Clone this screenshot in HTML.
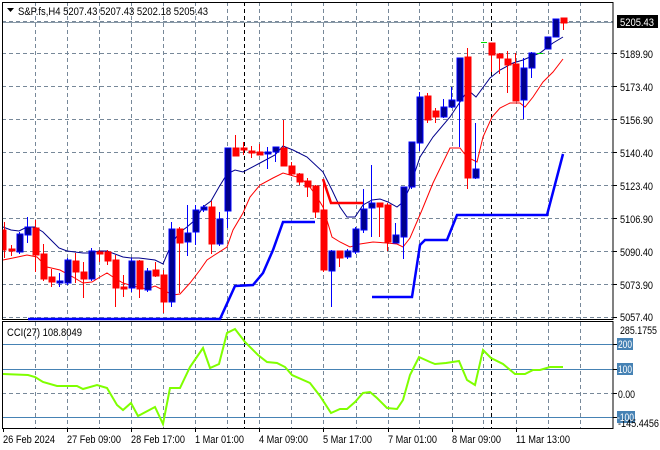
<!DOCTYPE html>
<html><head><meta charset="utf-8"><style>
html,body{margin:0;padding:0;background:#fff;width:660px;height:450px;overflow:hidden}
svg{display:block}
text{font-family:"Liberation Sans",sans-serif;font-size:11px;fill:#000}
</style></head><body>
<svg width="660" height="450" viewBox="0 0 660 450" xmlns="http://www.w3.org/2000/svg">
<rect width="660" height="450" fill="#fff"/>
<g stroke="#778899" stroke-width="1" stroke-dasharray="4,3" fill="none">
<path d="M2 21.5H613M2 53.5H613M2 86.5H613M2 119.5H613M2 152.5H613M2 185.5H613M2 218.5H613M2 251.5H613M2 284.5H613M2 317.5H613"/>
<path d="M35.5 2V319M67.5 2V319M99.5 2V319M131.5 2V319M163.5 2V319M195.5 2V319M227.5 2V319M259.5 2V319M291.5 2V319M323.5 2V319M356.5 2V319M388.5 2V319M419.5 2V319M452.5 2V319M483.5 2V319M516.5 2V319M548.5 2V319M580.5 2V319"/>
<path d="M35.5 322V428M67.5 322V428M99.5 322V428M131.5 322V428M163.5 322V428M195.5 322V428M227.5 322V428M259.5 322V428M291.5 322V428M323.5 322V428M356.5 322V428M388.5 322V428M419.5 322V428M452.5 322V428M483.5 322V428M516.5 322V428M548.5 322V428M580.5 322V428M2 393.5H613"/>
</g>
<g stroke="#000" stroke-dasharray="4,3"><path d="M244.5 2V319M244.5 322V428M491.5 2V319M491.5 322V428"/></g>
<path d="M2 22.5H613" stroke="#8a9aa8" stroke-width="1"/>
<g stroke="#4682b4"><path d="M2 344.5H613M2 369.5H613M2 417.5H613"/></g>
<rect x="2.5" y="2.5" width="610.5" height="317" fill="none" stroke="#000"/>
<rect x="2.5" y="321.5" width="610.5" height="107" fill="none" stroke="#000"/>
<g stroke="#000"><path d="M613 53.5h4M613 86.5h4M613 119.5h4M613 152.5h4M613 185.5h4M613 218.5h4M613 251.5h4M613 284.5h4M613 317.5h4M613 344.5h4M613 369.5h4M613 393.5h4M613 417.5h4"/>
<path d="M3.5 428v4M67.5 428v4M131.5 428v4M195.5 428v4M259.5 428v4M323.5 428v4M388.5 428v4M452.5 428v4M516.5 428v4"/></g>
<polyline fill="none" stroke="#00008b" stroke-width="1" points="3,227 11,230 19,231 27,227 35,227 43,232 51,240 59,248 67,251 75,252 83,253 91,253 99,251 107,251 115,254 123,257 131,258 139,258 147,259 155,260 163,264 171,245 179,233 187,227 195,220 203,207 211,201 219,187 227,174 235,170 243,172 260,163 275,155 283,146 293,150 307,157 323,172 332,190 340,207 347,217 355,217 363,205 372,200 380,199 388,202 397,207 403,202 410,187 420,157 433,137 450,117 460,102 468,90 476,97 490,78 500,70 513,63 523,60 530,57 540,53 553,43 563,37"/>
<polyline fill="none" stroke="#ff0000" stroke-width="1" points="3,260 13,258 27,255 37,257 47,267 60,270 73,277 83,283 92,282 100,277 107,273 113,277 123,283 133,286 147,289 155,286 163,290 173,295 180,294 190,283 200,270 207,260 213,256 227,247 233,230 243,213 250,197 260,185 273,178 283,173 297,177 307,183 317,197 323,207 332,237 340,242 350,247 360,244 373,242 387,243 397,244 403,247 410,238 422,210 433,183 450,148 460,148 467,157 477,162 483,137 492,117 500,108 510,103 520,103 525,107 533,97 543,82 553,72 563,59"/>
<polyline fill="none" stroke="#ff0000" stroke-width="2.5" points="323,179 331,203 363,203"/>
<polyline fill="none" stroke="#0000ff" stroke-width="2.5" points="28,319 220,319 235,286 253,285 263,273 273,250 283,222 315,222"/>
<polyline fill="none" stroke="#0000ff" stroke-width="2.5" points="372,297 412,297 420,245 425,240 447,240 457,215 547,215 563,154"/>
<g stroke-width="1">
<g stroke="#ff0000" fill="#ff0000">
<path d="M4.5 222V258M11.5 245V256M35.5 220V272M43.5 244V281M51.5 269V287M75.5 253V283M83.5 262V298M99.5 250V262M107.5 250V265M115.5 255V307M123.5 275V297M139.5 260V298M155.5 262V277M163.5 270V313M179.5 227V293M211.5 201V254M235.5 135V156M243.5 142V155M251.5 146V158M259.5 144V155M283.5 120V166M291.5 162V176M299.5 173V185M307.5 178V197M315.5 185V218M323.5 179V272M339.5 251V267M379.5 203V237M387.5 203V251M427.5 93V123M435.5 108V123M467.5 48V189M491.5 43V72M499.5 53V74M507.5 51V93M515.5 53V101M563.5 18V30"/>
<rect x="3" y="230" width="3" height="20"/><rect x="9" y="249" width="6" height="2"/>
<rect x="33" y="228" width="6" height="27"/><rect x="41" y="254" width="6" height="25"/>
<rect x="49" y="277" width="6" height="5"/><rect x="73" y="261" width="6" height="11"/>
<rect x="81" y="272" width="6" height="7"/><rect x="97" y="252" width="6" height="2"/>
<rect x="105" y="252" width="6" height="9"/><rect x="113" y="260" width="6" height="28"/>
<rect x="121" y="287" width="6" height="2"/><rect x="137" y="261" width="6" height="28"/>
<rect x="153" y="270" width="6" height="6"/><rect x="161" y="275" width="6" height="27"/>
<rect x="177" y="229" width="6" height="14"/><rect x="209" y="207" width="6" height="37"/>
<rect x="233" y="148" width="6" height="8"/><rect x="241" y="148" width="6" height="2"/>
<rect x="249" y="151" width="6" height="2"/><rect x="257" y="152" width="6" height="3"/>
<rect x="281" y="148" width="6" height="18"/><rect x="289" y="166" width="6" height="8"/>
<rect x="297" y="174" width="6" height="8"/><rect x="305" y="181" width="6" height="6"/>
<rect x="313" y="186" width="6" height="26"/><rect x="321" y="210" width="6" height="60"/>
<rect x="337" y="251" width="6" height="7"/><rect x="377" y="203" width="6" height="4"/>
<rect x="385" y="205" width="6" height="37"/><rect x="425" y="96" width="6" height="24"/>
<rect x="433" y="111" width="6" height="6"/><rect x="465" y="57" width="6" height="121"/>
<rect x="489" y="43" width="6" height="12"/><rect x="497" y="54" width="6" height="4"/>
<rect x="505" y="59" width="6" height="6"/><rect x="513" y="64" width="6" height="37"/>
<rect x="561" y="18" width="6" height="5"/>
</g>
<g stroke="#0000ff" fill="#00008b">
<path d="M19.5 232V254M27.5 217V243M59.5 273V287M67.5 258V285M91.5 248V281M131.5 258V292M147.5 268V292M171.5 222V307M187.5 205V256M195.5 205V245M203.5 205V212M219.5 212V246M227.5 148V228M267.5 147V169M275.5 147V162M331.5 250V307M347.5 249V259M355.5 227V254M363.5 189V233M371.5 165V237M395.5 223V243M403.5 187V259M411.5 142V189M419.5 92V151M443.5 99V118M451.5 87V108M459.5 58V147M475.5 123V179M523.5 58V119M531.5 52V78M547.5 37V49M555.5 19V37"/>
<rect x="17" y="234" width="6" height="18"/><rect x="25" y="227" width="6" height="8"/>
<rect x="57" y="281" width="6" height="2"/><rect x="65" y="260" width="6" height="23"/>
<rect x="89" y="251" width="6" height="28"/><rect x="129" y="261" width="6" height="27"/>
<rect x="145" y="271" width="6" height="19"/><rect x="169" y="229" width="6" height="73"/>
<rect x="185" y="233" width="6" height="9"/><rect x="193" y="210" width="6" height="22"/>
<rect x="201" y="207" width="6" height="3"/><rect x="217" y="219" width="6" height="25"/>
<rect x="225" y="148" width="6" height="63"/><rect x="265" y="152" width="6" height="2"/>
<rect x="273" y="147" width="6" height="5"/><rect x="329" y="251" width="6" height="20"/>
<rect x="345" y="251" width="6" height="6"/><rect x="353" y="229" width="6" height="23"/>
<rect x="361" y="209" width="6" height="21"/><rect x="369" y="203" width="6" height="5"/>
<rect x="393" y="235" width="6" height="8"/><rect x="401" y="187" width="6" height="50"/>
<rect x="409" y="142" width="6" height="45"/><rect x="417" y="97" width="6" height="46"/>
<rect x="441" y="107" width="6" height="10"/><rect x="449" y="100" width="6" height="7"/>
<rect x="457" y="58" width="6" height="43"/><rect x="473" y="169" width="6" height="9"/>
<rect x="521" y="68" width="6" height="32"/><rect x="529" y="53" width="6" height="15"/>
<rect x="545" y="37" width="6" height="12"/><rect x="553" y="19" width="6" height="18"/>
</g>
<path d="M481 42.5h6M537 53.5h6" stroke="#00dd00"/>
</g>
<polyline fill="none" stroke="#7fff00" stroke-width="2" points="3,374 28,375 35,377 43,382 57,386 67,386 77,386 83,389 97,385 107,388 117,405 123,410 131,403 138,416 155,407 163,424 170,388 180,388 190,367 203,348 210,368 219,364 227,333 235,329 245,342 258,355 267,362 277,363 285,367 292,375 310,383 320,396 331,413 340,409 347,409 355,402 363,393 370,392 377,398 387,408 397,409 403,400 410,375 419,357 430,362 435,364 446,363 459,361 467,380 475,385 483,350 491,358 503,364 515,374 525,374 533,370 540,370 550,367 563,367"/>
<path d="M7 8h7l-3.5 4z" fill="#000"/>
<text x="18" y="15" textLength="190" lengthAdjust="spacingAndGlyphs">S&amp;P.fs,H4  5207.43 5207.43 5202.18 5205.43</text>
<text x="7" y="336" textLength="75" lengthAdjust="spacingAndGlyphs">CCI(27) 108.8049</text>
<rect x="617" y="15" width="41" height="13" fill="#000"/>
<g lengthAdjust="spacingAndGlyphs">
<text x="620" y="26" style="fill:#fff" textLength="34" lengthAdjust="spacingAndGlyphs">5205.43</text>
<text x="620" y="58" textLength="33" lengthAdjust="spacingAndGlyphs">5189.90</text>
<text x="620" y="91" textLength="33" lengthAdjust="spacingAndGlyphs">5173.40</text>
<text x="620" y="124" textLength="33" lengthAdjust="spacingAndGlyphs">5156.90</text>
<text x="620" y="157" textLength="33" lengthAdjust="spacingAndGlyphs">5140.40</text>
<text x="620" y="190" textLength="33" lengthAdjust="spacingAndGlyphs">5123.40</text>
<text x="620" y="223" textLength="33" lengthAdjust="spacingAndGlyphs">5106.90</text>
<text x="620" y="256" textLength="33" lengthAdjust="spacingAndGlyphs">5090.40</text>
<text x="620" y="289" textLength="33" lengthAdjust="spacingAndGlyphs">5073.90</text>
<text x="620" y="321" textLength="33" lengthAdjust="spacingAndGlyphs">5057.40</text>
<text x="620" y="334" textLength="37" lengthAdjust="spacingAndGlyphs">285.1755</text>
</g>
<rect x="617" y="338" width="16" height="12" fill="#4682b4"/>
<text x="618" y="348" style="fill:#fff" textLength="14" lengthAdjust="spacingAndGlyphs">200</text>
<rect x="617" y="363" width="16" height="12" fill="#4682b4"/>
<text x="618" y="373" style="fill:#fff" textLength="14" lengthAdjust="spacingAndGlyphs">100</text>
<text x="618" y="398" textLength="17" lengthAdjust="spacingAndGlyphs">0.00</text>
<rect x="617" y="411" width="18" height="12" fill="#4682b4"/>
<text x="618" y="427" textLength="41" lengthAdjust="spacingAndGlyphs">-145.4456</text>
<text x="617" y="421" style="fill:#fff" textLength="17" lengthAdjust="spacingAndGlyphs">-100</text>
<text x="3" y="443" textLength="52" lengthAdjust="spacingAndGlyphs">26 Feb 2024</text>
<text x="67" y="443" textLength="54" lengthAdjust="spacingAndGlyphs">27 Feb 09:00</text>
<text x="131" y="443" textLength="54" lengthAdjust="spacingAndGlyphs">28 Feb 17:00</text>
<text x="195" y="443" textLength="49" lengthAdjust="spacingAndGlyphs">1 Mar 01:00</text>
<text x="259" y="443" textLength="49" lengthAdjust="spacingAndGlyphs">4 Mar 09:00</text>
<text x="323" y="443" textLength="49" lengthAdjust="spacingAndGlyphs">5 Mar 17:00</text>
<text x="388" y="443" textLength="49" lengthAdjust="spacingAndGlyphs">7 Mar 01:00</text>
<text x="452" y="443" textLength="49" lengthAdjust="spacingAndGlyphs">8 Mar 09:00</text>
<text x="516" y="443" textLength="54" lengthAdjust="spacingAndGlyphs">11 Mar 13:00</text>
</svg>
</body></html>
